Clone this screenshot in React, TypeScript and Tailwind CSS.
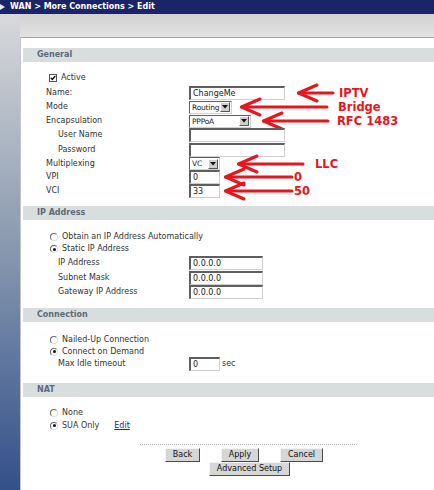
import React from "react";

type ArrowProps = { gap: number; len: number; textGap: number; label: string };

function RedArrow({ gap, len, textGap, label }: ArrowProps) {
  return (
    <div className="flex items-center" style={{ marginLeft: gap }}>
      <svg width={len} height={14} viewBox={`0 0 ${len} 14`} className="overflow-visible">
        <g stroke="#e5161d" strokeWidth={3} fill="none" strokeLinecap="round" strokeLinejoin="round">
          <path d={`M20 -1 L1.5 7 L20 15`} />
          <path d={`M1.5 7 H${len}`} />
        </g>
      </svg>
      <span
        className="font-['DejaVu_Sans',Verdana,sans-serif] text-[11.5px] font-bold leading-[14px] text-[#e5161d] whitespace-nowrap"
        style={{ marginLeft: textGap }}
      >
        {label}
      </span>
    </div>
  );
}

function TextBox({ w, value = "" }: { w: number; value?: string }) {
  return (
    <div
      className="h-[14px] border-t-2 border-l-2 border-b border-r border-t-[#5f5f5f] border-l-[#5f5f5f] border-b-[#cfcfcf] border-r-[#cfcfcf] bg-white pl-[2px] text-[8px] leading-[11px] text-[#222]"
      style={{ width: w }}
    >
      {value}
    </div>
  );
}

function DropDown({ w, value }: { w: number; value: string }) {
  return (
    <div
      className="flex h-[13px] items-center justify-between border-t border-l border-b border-r border-t-[#5f5f5f] border-l-[#5f5f5f] border-b-[#d0d0d0] border-r-[#d0d0d0] bg-white pl-[2px] pr-[1px] text-[7.5px] leading-[11px] text-[#222]"
      style={{ width: w }}
    >
      <span className="tracking-[-0.2px]">{value}</span>
      <span className="flex h-[10px] w-[10px] shrink-0 items-center justify-center border border-t-white border-l-white border-b-[#555] border-r-[#555] bg-[#cfcfcf]">
        <svg width="6" height="4" viewBox="0 0 6 4">
          <path d="M0 0 H6 L3 3.5 Z" fill="#111" />
        </svg>
      </span>
    </div>
  );
}

function Radio({ on }: { on?: boolean }) {
  return (
    <span className="flex h-[8px] w-[8px] items-center justify-center rounded-full border border-t-[#6a6a6a] border-l-[#6a6a6a] border-b-[#dedede] border-r-[#dedede] bg-white">
      {on && <span className="h-[3px] w-[3px] rounded-full bg-[#111]" />}
    </span>
  );
}

function SectionHead({ title, mt }: { title: string; mt: number }) {
  return (
    <div
      className="flex h-[14px] items-center bg-[#d7dedd] pl-[14px] text-[8px] font-bold text-[#5c6a79]"
      style={{ marginTop: mt }}
    >
      {title}
    </div>
  );
}

function Row({
  h,
  label,
  sub,
  children,
}: {
  h: number;
  label: string;
  sub?: boolean;
  children?: React.ReactNode;
}) {
  return (
    <div className="flex items-center" style={{ height: h }}>
      <div className={`w-[166px] shrink-0 ${sub ? "pl-[35px]" : "pl-[23px]"}`}>{label}</div>
      {children}
    </div>
  );
}

function RadioRow({ h, on, label, children }: { h: number; on?: boolean; label: string; children?: React.ReactNode }) {
  return (
    <div className="flex items-center pl-[27px]" style={{ height: h }}>
      <Radio on={on} />
      <span className="ml-[4px]">{label}</span>
      {children}
    </div>
  );
}

function Btn({ w, label }: { w: number; label: string }) {
  return (
    <div
      className="flex h-[14px] items-center justify-center border border-t-[#f4f4f4] border-l-[#f4f4f4] border-b-[#4a4a4a] border-r-[#4a4a4a] bg-[#d6d6d6] text-[8px] text-[#111]"
      style={{ width: w }}
    >
      {label}
    </div>
  );
}

export default function App() {
  return (
    <div className="flex h-[490px] w-[434px] flex-col overflow-hidden bg-[#d9d9d9] font-['DejaVu_Sans',Verdana,sans-serif] text-[8px] text-[#333]">
      {/* title bar */}
      <div className="flex h-[14px] shrink-0 items-center bg-[#1b2466] text-[8px] font-bold text-white">
        <svg width="6" height="8" viewBox="0 0 6 8">
          <path d="M0 1 L5 4 L0 7 Z" fill="#e8ecf6" />
        </svg>
        <span className="ml-[4px]">WAN &gt; More Connections &gt; Edit</span>
      </div>

      <div className="flex min-h-0 flex-1">
        {/* side strip */}
        <div className="w-[20px] shrink-0 bg-linear-to-b from-[#d8d9db] via-[#8797ae] to-[#34508a]" />

        <div className="flex min-w-0 flex-1 flex-col">
          <div className="h-[23px] shrink-0 bg-linear-to-b from-[#d2d2d2] to-[#e2e2e2]" />

          <div className="flex-1 border-t border-l border-t-[#a9a9a9] border-l-[#c4c4c4] bg-white pl-[2px]">
            <SectionHead title="General" mt={10} />

            <div className="mt-[9px] flex h-[14px] items-center pl-[26px]">
              <svg width="8" height="8" viewBox="0 0 8 8">
                <rect x="0.5" y="0.5" width="7" height="7" fill="#fff" stroke="#555" />
                <path d="M1.8 3.8 L3.3 5.4 L6.3 2" stroke="#111" strokeWidth="1.4" fill="none" />
              </svg>
              <span className="ml-[4px]">Active</span>
            </div>

            <Row h={15} label="Name:">
              <TextBox w={96} value="ChangeMe" />
              <RedArrow gap={12} len={36} textGap={6} label="IPTV" />
            </Row>
            <Row h={14} label="Mode">
              <DropDown w={43} value="Routing" />
              <RedArrow gap={8} len={87} textGap={11} label="Bridge" />
            </Row>
            <Row h={14} label="Encapsulation">
              <DropDown w={62} value="PPPoA" />
              <RedArrow gap={11} len={66} textGap={9} label="RFC 1483" />
            </Row>
            <Row h={14} label="User Name" sub>
              <TextBox w={96} />
            </Row>
            <Row h={15} label="Password" sub>
              <TextBox w={96} />
            </Row>
            <Row h={13} label="Multiplexing">
              <DropDown w={31} value="VC" />
              <RedArrow gap={17} len={66} textGap={12} label="LLC" />
            </Row>
            <Row h={14} label="VPI">
              <TextBox w={31} value="0" />
              <RedArrow gap={4} len={68} textGap={2} label="0" />
            </Row>
            <Row h={14} label="VCI">
              <TextBox w={31} value="33" />
              <RedArrow gap={4} len={68} textGap={2} label="50" />
            </Row>

            <SectionHead title="IP Address" mt={8} />
            <div className="mt-[10px]" />
            <RadioRow h={13} label="Obtain an IP Address Automatically" />
            <RadioRow h={12} on label="Static IP Address" />
            <Row h={15} label="IP Address" sub>
              <TextBox w={74} value="0.0.0.0" />
            </Row>
            <Row h={15} label="Subnet Mask" sub>
              <TextBox w={74} value="0.0.0.0" />
            </Row>
            <Row h={14} label="Gateway IP Address" sub>
              <TextBox w={74} value="0.0.0.0" />
            </Row>

            <SectionHead title="Connection" mt={9} />
            <div className="mt-[11px]" />
            <RadioRow h={13} label="Nailed-Up Connection" />
            <RadioRow h={11} on label="Connect on Demand" />
            <Row h={14} label="Max Idle timeout" sub>
              <TextBox w={31} value="0" />
              <span className="ml-[2px]">sec</span>
            </Row>

            <SectionHead title="NAT" mt={12} />
            <div className="mt-[9px]" />
            <RadioRow h={13} label="None" />
            <RadioRow h={13} on label="SUA Only">
              <span className="ml-[15px] text-[#1f1f8f] underline">Edit</span>
            </RadioRow>

            <div className="ml-[117px] mt-[12px] w-[217px] border-t border-dotted border-t-[#b5b5b5]" />

            <div className="ml-[142px] mt-[3px] flex gap-[21px]">
              <Btn w={35} label="Back" />
              <Btn w={38} label="Apply" />
              <Btn w={43} label="Cancel" />
            </div>
            <div className="ml-[186px] flex">
              <Btn w={81} label="Advanced Setup" />
            </div>
          </div>
        </div>
      </div>
    </div>
  );
}
